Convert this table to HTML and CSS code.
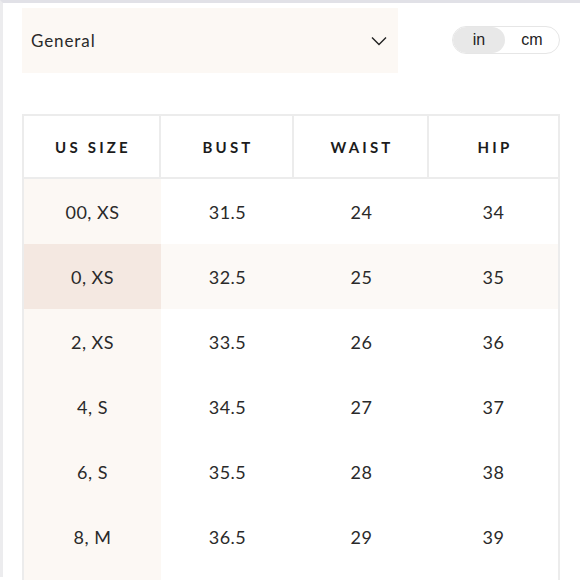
FILE: index.html
```html
<!DOCTYPE html>
<html>
<head>
<meta charset="utf-8">
<link rel="stylesheet" href="styles.css">
</head>
<body>
<div class="frame">
  <div class="controls">
    <div class="select">
      <span class="select-label">General</span>
      <svg class="chevron" width="16" height="10" viewBox="0 0 16 10"><path d="M1 1.5 L8 8.5 L15 1.5" fill="none" stroke="#222" stroke-width="1.4"/></svg>
    </div>
    <div class="units">
      <span class="unit active">in</span>
      <span class="unit">cm</span>
    </div>
  </div>
  <div class="sizes">
    <div class="cell head">US SIZE</div><div class="cell head">BUST</div><div class="cell head">WAIST</div><div class="cell head">HIP</div>
    <div class="cell first">00, XS</div><div class="cell">31.5</div><div class="cell">24</div><div class="cell last">34</div>
    <div class="cell first hl-first">0, XS</div><div class="cell hl">32.5</div><div class="cell hl">25</div><div class="cell last hl">35</div>
    <div class="cell first">2, XS</div><div class="cell">33.5</div><div class="cell">26</div><div class="cell last">36</div>
    <div class="cell first">4, S</div><div class="cell">34.5</div><div class="cell">27</div><div class="cell last">37</div>
    <div class="cell first">6, S</div><div class="cell">35.5</div><div class="cell">28</div><div class="cell last">38</div>
    <div class="cell first">8, M</div><div class="cell">36.5</div><div class="cell">29</div><div class="cell last">39</div>
    <div class="cell first"></div><div class="cell"></div><div class="cell"></div><div class="cell last"></div>
  </div>
</div>
</body>
</html>
```

FILE: styles.css
```css
html, body {
  margin: 0;
  padding: 0;
  background: #fff;
  overflow: hidden;
}
body {
  font-family: Lato, "Open Sans", sans-serif;
  color: #2a2a2a;
  width: 580px;
  height: 580px;
}
.frame {
  border-top: 3px solid #e1e1e7;
  border-left: 3px solid #ececee;
  height: 577px;
  box-sizing: border-box;
  padding: 5px 0 0 19px;
}
.controls {
  display: flex;
  align-items: center;
  width: 538px;
  justify-content: space-between;
}
.select {
  width: 376px;
  height: 65px;
  background: #fcf8f4;
  display: flex;
  align-items: center;
  justify-content: space-between;
  padding: 0 11px 0 9px;
  box-sizing: border-box;
}
.select-label {
  font-size: 17px;
  letter-spacing: 0.9px;
  color: #2a2a2a;
}
.chevron {
  display: block;
}
.units {
  display: flex;
  width: 108px;
  height: 28px;
  border: 1px solid #e6e6e6;
  border-radius: 14px;
  box-sizing: border-box;
  overflow: hidden;
  margin-top: -1px;
}
.unit {
  flex: 1;
  display: flex;
  align-items: center;
  justify-content: center;
  font-family: "Liberation Sans", Arial, sans-serif;
  font-size: 16px;
  color: #222;
}
.unit.active {
  flex: 0 0 52px;
  background: #e8e8e8;
  border-radius: 14px;
}
.sizes {
  margin-top: 41px;
  width: 538px;
  display: grid;
  grid-template-columns: 139px 133px 135px 131px;
  grid-template-rows: 63px;
  grid-auto-rows: 65px;
  border-top: 2px solid #ececec;
}
.cell {
  display: flex;
  align-items: center;
  justify-content: center;
  font-size: 18px;
  letter-spacing: 0.5px;
  color: #2a2a2a;
}
.cell.head {
  font-size: 15px;
  font-weight: 700;
  letter-spacing: 3.2px;
  color: #1c1c1c;
  border-right: 2px solid #ececec;
  border-bottom: 2px solid #ececec;
  padding-left: 3px;
}
.cell.head:first-child {
  border-left: 2px solid #ececec;
}
.cell.first {
  background: #fcf8f4;
  border-left: 2px solid #ececec;
}
.cell.last {
  border-right: 2px solid #ececec;
}
.cell.hl {
  background: #fcf9f6;
}
.cell.hl-first {
  background: #f4e8e1;
}
```
